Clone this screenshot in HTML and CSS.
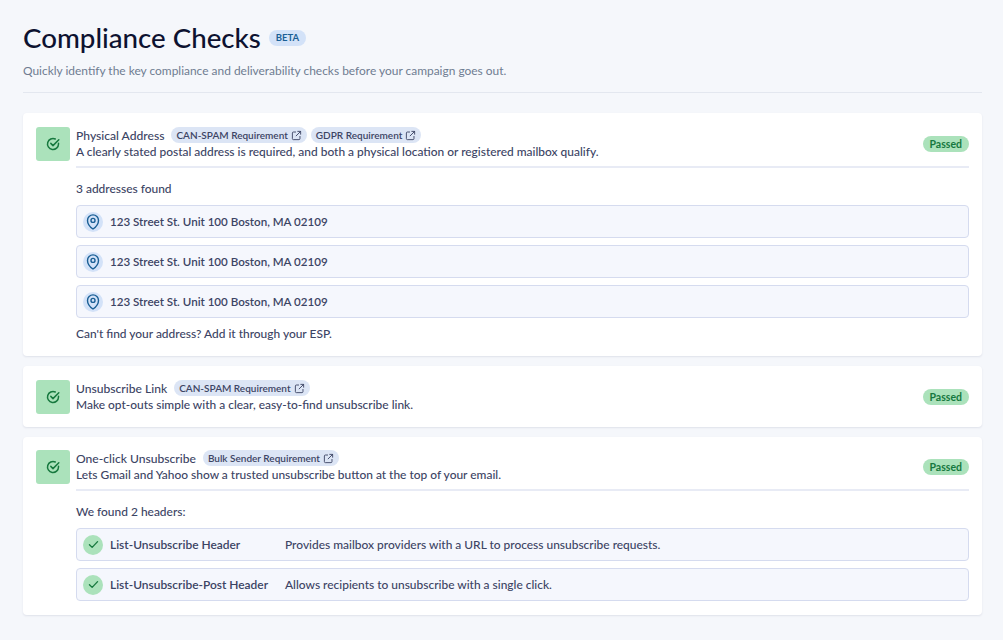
FILE: index.html
```html
<!DOCTYPE html>
<html>
<head>
    <meta charset="UTF-8">
    <title>Compliance Checks</title>
    <link rel="stylesheet" href="styles.css">
</head>

<body>
    <svg class="icon-defs" width="0" height="0">
        <symbol id="external" viewBox="0 0 12 12">
            <path d="M5 2.200H2.600A1.100 1.100 0 0 0 1.500 3.300v6.100a1.100 1.100 0 0 0 1.100 1.100h6.100a1.100 1.100 0 0 0 1.100-1.100V7" fill="none" stroke="currentColor" stroke-width="1" stroke-linecap="round"/>
            <path d="M7.400 1.500h3.100v3.100M10.500 1.500 5.600 6.400" fill="none" stroke="currentColor" stroke-width="1" stroke-linecap="round" stroke-linejoin="round"/>
        </symbol>
        <symbol id="check-circle" viewBox="0 0 14 14">
            <path d="M12.500 6.200v.8a5.500 5.500 0 1 1-3.200-5" fill="none" stroke="currentColor" stroke-width="1.500" stroke-linecap="round"/>
            <path d="M4.800 6.400 7 8.600l5.800-5.800" fill="none" stroke="currentColor" stroke-width="1.500" stroke-linecap="round" stroke-linejoin="round"/>
        </symbol>
        <symbol id="pin" viewBox="0 0 14 16">
            <path d="M7 15s5.500-3.900 5.500-8.600A5.500 5.500 0 0 0 1.500 6.400C1.500 11.100 7 15 7 15z" fill="none" stroke="currentColor" stroke-width="1.400" stroke-linejoin="round"/>
            <circle cx="7" cy="6.400" r="2" fill="none" stroke="currentColor" stroke-width="1.400"/>
        </symbol>
        <symbol id="check" viewBox="0 0 12 10">
            <path d="M1.500 5.200 4.500 8.200 10.500 1.800" fill="none" stroke="currentColor" stroke-width="1.500" stroke-linecap="round" stroke-linejoin="round"/>
        </symbol>
    </svg>

    <header class="page-header">
        <div class="title-row">
            <h1>Compliance Checks</h1>
            <span class="beta">BETA</span>
        </div>
        <p class="subtitle">Quickly identify the key compliance and deliverability checks before your campaign goes out.</p>
    </header>

    <!-- Physical address -->
    <section class="card">
        <div class="status-icon"><svg><use href="#check-circle"/></svg></div>
        <div class="card-body">
            <div class="card-head has-detail">
                <div class="head-text">
                    <div class="head-title">
                        <span class="check-name">Physical Address</span>
                        <span class="tags">
                            <a class="tag">CAN-SPAM Requirement <svg><use href="#external"/></svg></a>
                            <a class="tag">GDPR Requirement <svg><use href="#external"/></svg></a>
                        </span>
                    </div>
                    <p>A clearly stated postal address is required, and both a physical location or registered mailbox qualify.</p>
                </div>
                <span class="passed">Passed</span>
            </div>
            <p class="detail-label">3 addresses found</p>
            <div class="rows">
                <div class="row">
                    <span class="row-icon pin"><svg><use href="#pin"/></svg></span>
                    <strong class="address">123 Street St. Unit 100 Boston, MA 02109</strong>
                </div>
                <div class="row">
                    <span class="row-icon pin"><svg><use href="#pin"/></svg></span>
                    <strong class="address">123 Street St. Unit 100 Boston, MA 02109</strong>
                </div>
                <div class="row">
                    <span class="row-icon pin"><svg><use href="#pin"/></svg></span>
                    <strong class="address">123 Street St. Unit 100 Boston, MA 02109</strong>
                </div>
            </div>
            <p class="detail-foot">Can't find your address? Add it through your ESP.</p>
        </div>
    </section>

    <!-- Unsubscribe link -->
    <section class="card">
        <div class="status-icon"><svg><use href="#check-circle"/></svg></div>
        <div class="card-body">
            <div class="card-head">
                <div class="head-text">
                    <div class="head-title">
                        <span class="check-name">Unsubscribe Link</span>
                        <span class="tags">
                            <a class="tag">CAN-SPAM Requirement <svg><use href="#external"/></svg></a>
                        </span>
                    </div>
                    <p>Make opt-outs simple with a clear, easy-to-find unsubscribe link.</p>
                </div>
                <span class="passed">Passed</span>
            </div>
        </div>
    </section>

    <!-- One-click unsubscribe -->
    <section class="card card-last">
        <div class="status-icon"><svg><use href="#check-circle"/></svg></div>
        <div class="card-body">
            <div class="card-head has-detail">
                <div class="head-text">
                    <div class="head-title">
                        <span class="check-name">One-click Unsubscribe</span>
                        <span class="tags">
                            <a class="tag">Bulk Sender Requirement <svg><use href="#external"/></svg></a>
                        </span>
                    </div>
                    <p>Lets Gmail and Yahoo show a trusted unsubscribe button at the top of your email.</p>
                </div>
                <span class="passed">Passed</span>
            </div>
            <p class="detail-label">We found 2 headers:</p>
            <div class="rows">
                <div class="row">
                    <span class="row-icon ok"><svg><use href="#check"/></svg></span>
                    <strong class="header-name">List-Unsubscribe Header</strong>
                    <span>Provides mailbox providers with a URL to process unsubscribe requests.</span>
                </div>
                <div class="row">
                    <span class="row-icon ok"><svg><use href="#check"/></svg></span>
                    <strong class="header-name">List-Unsubscribe-Post Header</strong>
                    <span>Allows recipients to unsubscribe with a single click.</span>
                </div>
            </div>
        </div>
    </section>
</body>
</html>
```

FILE: styles.css
```css
body {
    margin: 0;
    padding: 0 21px 0 23px;
    font-family: "Lato", "Liberation Sans", sans-serif;
    font-size: 11.95px;
    font-weight: 500;
    color: #3c4464;
    background-color: #F5F7FB;
}
p {
    margin: 0;
}
.icon-defs {
    position: absolute;
}

/* header */
.page-header {
    height: 92px;
    margin-bottom: 20px;
    border-bottom: 1px solid #E3E7EF;
}
.title-row {
    display: flex;
    align-items: center;
    gap: 8px;
    padding-top: 21px;
}
.title-row h1 {
    margin: 0;
    font-size: 27.7px;
    line-height: 34px;
    font-weight: 500;
    color: #0d1230;
}
.beta {
    padding: 0 7px;
    line-height: 16px;
    border-radius: 8px;
    background-color: #D3E2F8;
    color: #1a5f95;
    font-size: 9.5px;
    font-weight: 700;
}
.subtitle {
    margin-top: 8px;
    color: #6f7c91;
    font-weight: 400;
    line-height: 16px;
}

/* cards */
.card {
    display: flex;
    gap: 6px;
    padding: 14px 13px 13px;
    margin-bottom: 10px;
    background-color: #FFFFFF;
    border-radius: 4px;
    box-shadow: 0 1px 2px rgba(40, 50, 90, 0.1);
}
.card-last {
    padding: 13px 13px 14px;
}
.status-icon {
    flex: none;
    display: flex;
    align-items: center;
    justify-content: center;
    width: 34px;
    height: 34px;
    border-radius: 3px;
    background-color: #ABE2BB;
    color: #17793F;
}
.status-icon svg {
    width: 14px;
    height: 14px;
}
.card-body {
    flex: 1;
}
.card-head {
    display: flex;
    align-items: center;
    justify-content: space-between;
}
.card-head.has-detail {
    padding-bottom: 6px;
    border-bottom: 2px solid #E8EBF5;
}
.head-text p {
    line-height: 16px;
}
.head-title {
    display: flex;
    align-items: center;
    gap: 7px;
    height: 18px;
    margin-top: -1px;
}
.check-name {
    font-size: 12.1px;
}
.tags {
    display: flex;
    gap: 4px;
}
.tag {
    display: flex;
    align-items: center;
    gap: 3px;
    padding: 0 5px;
    height: 16px;
    border-radius: 8px;
    background-color: #DCE5F5;
    font-size: 10px;
    font-weight: 600;
}
.tag svg {
    width: 11px;
    height: 11px;
}
.passed {
    padding: 0 7px;
    line-height: 16px;
    border-radius: 8px;
    background-color: #ABE2BB;
    color: #17793F;
    font-size: 10.5px;
    font-weight: 700;
}
.detail-label {
    margin: 13px 0 8px;
    line-height: 16px;
}
.rows {
    display: flex;
    flex-direction: column;
    gap: 7px;
}
.row {
    display: flex;
    align-items: center;
    height: 33px;
    box-sizing: border-box;
    padding-left: 6px;
    background-color: #F5F7FD;
    border: 1px solid #D5DBEF;
    border-radius: 4px;
}
.row strong {
    font-weight: 600;
}
.row-icon {
    flex: none;
    display: flex;
    align-items: center;
    justify-content: center;
    width: 20px;
    height: 20px;
    margin-right: 7px;
    border-radius: 50%;
}
.row-icon.pin {
    background-color: #D3E2F8;
    color: #1a5f95;
}
.row-icon.pin svg {
    width: 14px;
    height: 16px;
}
.row-icon.ok {
    background-color: #ABE2BB;
    color: #17793F;
}
.row-icon.ok svg {
    width: 11px;
    height: 9px;
}
.row .address {
    font-size: 11.6px;
}
.header-name {
    width: 175px;
}
.detail-foot {
    margin-top: 8px;
    padding-bottom: 1px;
    line-height: 16px;
}
```
